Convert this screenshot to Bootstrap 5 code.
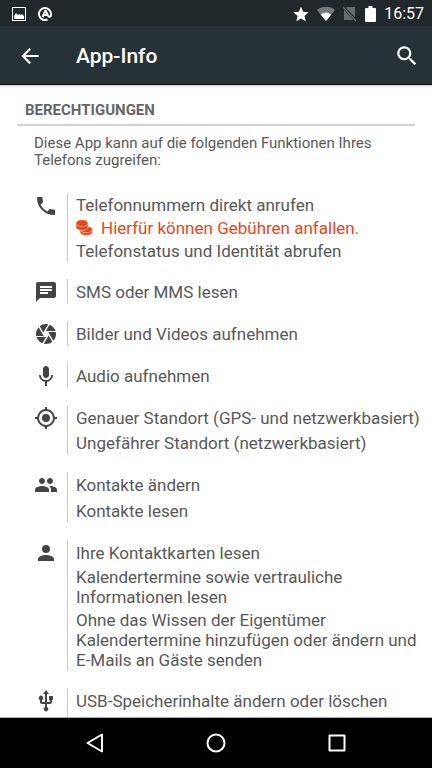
<!DOCTYPE html>
<html lang="de">
<head>
<meta charset="utf-8">
<meta name="viewport" content="width=device-width, initial-scale=1">
<title>App-Info</title>
<link href="https://cdn.jsdelivr.net/npm/bootstrap@5.3.0/dist/css/bootstrap.min.css" rel="stylesheet">
<style>
body{font-family:Roboto,"Noto Sans",sans-serif;color:#585858;background:#fff}
svg{display:block;flex:none;fill:currentColor}
.status{height:26px;background:#20282c;font-size:16px;line-height:26px;padding:1px 8px 0 12px}
.status-icons{gap:8px}
.outlined{fill:none;stroke:#fff;stroke-width:2;stroke-linejoin:round}
.appbar{height:59px;background:#263238;border-bottom:1px solid #05090b;padding:2px 12px 0 17px}
.appbar h1{font-size:21px;line-height:28px;font-weight:500;padding-left:33px}
.content-area{min-height:0;overflow:auto;scrollbar-width:none;box-shadow:inset 0 3px 2px -1px #e2dfe6;border-bottom:1px solid #aaa}
.content-area::-webkit-scrollbar{display:none}
.section-head{font-size:15px;line-height:20px;font-weight:700;color:#666;margin:15px 17px 0;padding:0 8px 4px;border-bottom:2px solid #d2d2d2}
.intro{font-size:15px;line-height:17px;margin:9px 34px 24px}
.groups{gap:17px;padding:0 12px 0 34px}
.perm-icon{width:24px;height:24px;color:#444;margin-top:1px}
.perms{margin-left:9px;padding-left:8px;border-left:1px solid #ccc;font-size:17px;line-height:20px}
.perms li{min-height:25px;padding:1px 0;display:flex;align-items:center}
.perms.dense li{min-height:23px}
.perms.spaced{gap:1px}
.perms.more{padding-bottom:17px}
.cost{color:#ee4416;gap:8px}
.bottom-nav{height:50px;gap:100px;background:#000}
.plain{background:none;border:0;padding:0;color:#fff}
</style>
<script src="https://cdn.jsdelivr.net/npm/bootstrap@5.3.0/dist/js/bootstrap.bundle.min.js"></script>
</head>
<body class="d-flex flex-column vh-100 overflow-hidden">
<div class="status d-flex align-items-center text-white flex-shrink-0">
  <svg width="14" height="14" viewBox="0 0 14 14"><path fill-rule="evenodd" d="M0 0h14v14H0zM1 1v12h12V1z"/><path d="M2 12V9l2-3 2 2 1-1 2 1 1-1 2 2v3z"/></svg>
  <svg class="ms-2 ps-1" width="18" height="14" viewBox="0 0 14 14"><path class="outlined" d="M9.500 12.500A6 6 0 1 1 13 7v1c0 2.200-2.500 2.400-3 .5L7.500 3.500 4.500 10M5.500 8h4"/></svg>
  <div class="status-icons d-flex align-items-center ms-auto">
    <svg width="16" height="16" viewBox="2 1 20 21"><path d="M12 17.3 18.2 21l-1.6-7L22 9.2l-7.2-.6L12 2 9.2 8.6 2 9.2 7.5 14l-1.7 7z"/></svg>
    <svg width="18" height="16" viewBox="0 0 18 16"><path opacity=".38" d="M0 4a14 14 0 0 1 18 0L9 15z"/><path d="M3.700 8.500a8.600 8.600 0 0 1 10.600 0L9 15z"/></svg>
    <svg width="14" height="16" viewBox="0 0 14 16"><path fill="#656b6e" d="M4 1h8v10L3 2zM1 4l9.500 10H1z"/><path fill="none" stroke="#656b6e" stroke-width="1.400" d="m0 1 13 14"/></svg>
    <svg width="11" height="16" viewBox="0 0 11 16"><path d="M3.500 0h4v2H10q1 0 1 1v12q0 1-1 1H1q-1 0-1-1V3q0-1 1-1h2.500z"/></svg>
    <span class="time-text">16:57</span>
  </div>
</div>
<header class="appbar d-flex align-items-center text-white flex-shrink-0">
  <button class="plain" aria-label="Zurück"><svg width="26" height="26" viewBox="0 0 24 24"><path d="M20 11H7.800l5-5L11.500 4.500 4 12l7.500 7.500 1.300-1.500-5-5H20z"/></svg></button>
  <h1 class="mb-0 flex-grow-1">App-Info</h1>
  <button class="plain" aria-label="Suchen"><svg width="26" height="26" viewBox="0 0 24 24"><path d="M15.500 14h-.8l-.3-.3A6.500 6.500 0 1 0 13.700 14.400l.3.300v.8l5 5 1.500-1.500zm-6 0a4.500 4.500 0 1 1 0-9 4.500 4.500 0 0 1 0 9z"/></svg></button>
</header>
<main class="content-area flex-grow-1">
  <h2 class="section-head">BERECHTIGUNGEN</h2>
  <p class="intro">Diese App kann auf die folgenden Funktionen Ihres Telefons zugreifen:</p>
  <div class="groups d-flex flex-column">
    <section class="d-flex">
      <svg class="perm-icon" viewBox="0 0 24 24"><path d="M6.600 10.800c1.400 2.800 3.800 5.100 6.600 6.600l2.200-2.200c.3-.3.700-.4 1-.2 1.100.4 2.300.6 3.600.6.600 0 1 .4 1 1V20c0 .6-.4 1-1 1C10.600 21 3 13.400 3 4c0-.6.500-1 1-1h3.500c.6 0 1 .4 1 1 0 1.300.2 2.500.6 3.600.1.300 0 .7-.3 1z"/></svg>
      <ul class="perms dense list-unstyled mb-0 flex-grow-1">
        <li>Telefonnummern direkt anrufen</li>
        <li class="cost"><svg width="17" height="17" viewBox="0 0 17 17"><g stroke="#fff" stroke-width=".5"><path d="M4 10v3c0 4.500 12.500 4.500 12.500 0v-3z"/><ellipse cx="10.300" cy="10.500" rx="6.200" ry="3.200"/><path d="M0 4v4c0 4.500 12 4.500 12 0V4z"/><ellipse cx="6" cy="4.200" rx="6" ry="3.400"/></g></svg>Hierfür können Gebühren anfallen.</li>
        <li>Telefonstatus und Identität abrufen</li>
      </ul>
    </section>
    <section class="d-flex">
      <svg class="perm-icon" viewBox="0 0 24 24"><path d="M20 2H4c-1.100 0-2 .9-2 2v18l4-4h14c1.100 0 2-.9 2-2V4c0-1.100-.9-2-2-2zM6 9h12v2H6zm8 5H6v-2h8zm4-6H6V6h12z"/></svg>
      <ul class="perms list-unstyled mb-0 flex-grow-1"><li>SMS oder MMS lesen</li></ul>
    </section>
    <section class="d-flex">
      <svg class="perm-icon" viewBox="0 0 24 24"><path d="M9.400 10.500l4.770-8.260C13.470 2.090 12.750 2 12 2c-2.400 0-4.600.850-6.320 2.250l3.660 6.350.06-.1zM21.540 9c-.920-2.920-3.150-5.260-6-6.340L11.880 9h9.660zm.260 1h-7.490l.290.500 4.760 8.250C21 16.970 22 14.610 22 12c0-.690-.070-1.350-.2-2zM8.540 12l-3.900-6.750C3.010 7.030 2 9.390 2 12c0 .690.070 1.350.2 2h7.490l-1.150-2zm-6.080 3c.920 2.920 3.150 5.260 6 6.340L12.120 15H2.460zm11.270 0l-3.900 6.760c.7.150 1.420.240 2.170.240 2.400 0 4.600-.850 6.320-2.250l-3.660-6.350-.930 1.600z"/></svg>
      <ul class="perms list-unstyled mb-0 flex-grow-1"><li>Bilder und Videos aufnehmen</li></ul>
    </section>
    <section class="d-flex">
      <svg class="perm-icon" viewBox="0 0 24 24"><path d="M12 14c1.660 0 3-1.340 3-3V5c0-1.660-1.340-3-3-3S9 3.340 9 5v6c0 1.660 1.340 3 3 3zm5.300-3c0 3-2.540 5.100-5.300 5.100S6.700 14 6.700 11H5c0 3.410 2.720 6.230 6 6.720V22h2v-4.280c3.280-.490 6-3.310 6-6.720z"/></svg>
      <ul class="perms list-unstyled mb-0 flex-grow-1"><li>Audio aufnehmen</li></ul>
    </section>
    <section class="d-flex">
      <svg class="perm-icon" viewBox="0 0 24 24"><circle cx="12" cy="12" r="4"/><path d="M20.900 11A9 9 0 0 0 13 3.100V1h-2v2.100A9 9 0 0 0 3.100 11H1v2h2.100a9 9 0 0 0 7.900 7.900V23h2v-2.100a9 9 0 0 0 7.900-7.900H23v-2zM12 19a7 7 0 1 1 0-14 7 7 0 0 1 0 14z"/></svg>
      <ul class="perms list-unstyled mb-0 flex-grow-1"><li>Genauer Standort (GPS- und netzwerkbasiert)</li><li>Ungefährer Standort (netzwerkbasiert)</li></ul>
    </section>
    <section class="d-flex">
      <svg class="perm-icon" viewBox="0 0 24 24"><path d="M16 11c1.660 0 2.990-1.340 2.990-3S17.660 5 16 5s-3 1.340-3 3 1.340 3 3 3zm-8 0c1.660 0 2.990-1.340 2.990-3S9.660 5 8 5 5 6.340 5 8s1.340 3 3 3zm0 2c-2.330 0-7 1.170-7 3.500V19h14v-2.500c0-2.330-4.670-3.500-7-3.500zm8 0c-.290 0-.620.020-.970.050 1.160.840 1.970 1.970 1.970 3.450V19h6v-2.500c0-2.330-4.670-3.500-7-3.500z"/></svg>
      <ul class="perms spaced list-unstyled mb-0 flex-grow-1 d-flex flex-column"><li>Kontakte ändern</li><li>Kontakte lesen</li></ul>
    </section>
    <section class="d-flex">
      <svg class="perm-icon" viewBox="0 0 24 24"><path d="M12 12a4 4 0 1 0 0-8 4 4 0 0 0 0 8zm0 2c-2.670 0-8 1.340-8 4v2h16v-2c0-2.660-5.330-4-8-4z"/></svg>
      <ul class="perms spaced list-unstyled mb-0 flex-grow-1 d-flex flex-column"><li>Ihre Kontaktkarten lesen</li><li>Kalendertermine sowie vertrauliche Informationen lesen</li><li>Ohne das Wissen der Eigentümer Kalendertermine hinzufügen oder ändern und E-Mails an Gäste senden</li></ul>
    </section>
    <section class="d-flex">
      <svg class="perm-icon" viewBox="0 0 24 24"><path d="M15 7v4h1v2h-3V5h2l-3-4-3 4h2v8H8v-2.070A2.200 2.200 0 1 0 5.900 10.900L6 13c0 1.110.890 2 2 2h3v3.050A2.210 2.210 0 1 0 13 18.050V15h3c1.110 0 2-.890 2-2v-2h1V7z"/></svg>
      <ul class="perms more list-unstyled mb-0 flex-grow-1"><li>USB-Speicherinhalte ändern oder löschen</li></ul>
    </section>
  </div>
</main>
<nav class="bottom-nav d-flex justify-content-center align-items-center flex-shrink-0" aria-label="Systemnavigation">
  <button class="plain" aria-label="Zurück"><svg width="20" height="22" viewBox="0 0 20 22"><path class="outlined" d="M2.500 11 17 2.500v17z"/></svg></button>
  <button class="plain" aria-label="Startseite"><svg width="22" height="22" viewBox="0 0 22 22"><circle class="outlined" cx="11" cy="11" r="8.500"/></svg></button>
  <button class="plain" aria-label="Übersicht"><svg width="20" height="22" viewBox="0 0 20 22"><rect class="outlined" x="2.500" y="3.500" width="15" height="15"/></svg></button>
</nav>
</body>
</html>
